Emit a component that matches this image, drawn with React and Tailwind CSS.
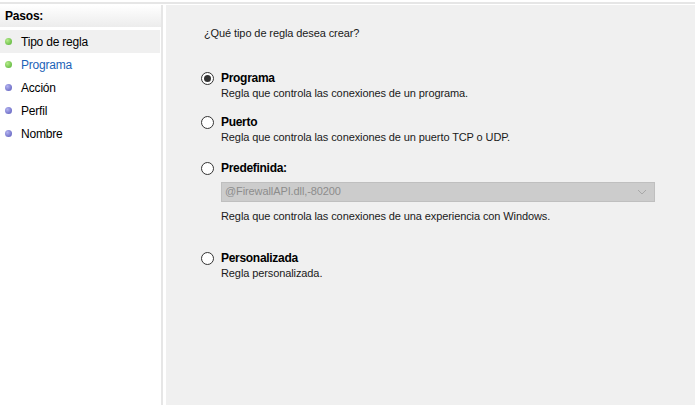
import React from "react";

const steps = [
  { label: "Tipo de regla", done: true, selected: true },
  { label: "Programa", done: true, current: true },
  { label: "Acción" },
  { label: "Perfil" },
  { label: "Nombre" },
];

const Bullet = ({ done }) => (
  <span
    className={`w-[7px] h-[7px] rounded-full shrink-0 ${
      done
        ? "bg-[radial-gradient(circle_at_35%_35%,#b6ec8c,#4fae2e)]"
        : "bg-[radial-gradient(circle_at_35%_35%,#b4b4f0,#5555b8)]"
    }`}
  />
);

const Radio = ({ checked }) => (
  <span className="w-[13px] h-[13px] rounded-full border border-[#333] bg-white flex items-center justify-center shrink-0">
    {checked && <span className="w-[7px] h-[7px] rounded-full bg-[#333]" />}
  </span>
);

const Option = ({ title, desc, checked, children, className = "" }) => (
  <div className={`flex gap-[7px] ${className}`}>
    <div className="pt-[1px]">
      <Radio checked={checked} />
    </div>
    <div className="flex-1">
      <div className="font-bold text-black leading-[15px] text-[12px] tracking-[-0.3px]">{title}</div>
      {children}
      <div className="leading-[15px]">{desc}</div>
    </div>
  </div>
);

export default function App() {
  return (
    <div
      className="w-[695px] h-[405px] bg-white text-[11px] tracking-[-0.1px] text-[#1a1a1a] flex flex-col overflow-hidden"
      style={{ fontFamily: '"Liberation Sans", Arial, sans-serif' }}
    >
      <div className="h-[5px] pt-[2px] shrink-0">
        <div className="h-[2px] bg-[#e6e6e6]" />
      </div>
      <div className="flex flex-1">
        {/* steps */}
        <div className="w-[163px] shrink-0 border-r-2 border-[#e6e6e6] text-[12px] tracking-[-0.2px]">
          <div className="h-[22px] bg-gradient-to-b from-white to-[#ececec] flex items-center pl-[5px] font-bold text-black">
            Pasos:
          </div>
          <div className="mt-[3px] flex flex-col">
            {steps.map((s) => (
              <div
                key={s.label}
                className={`h-[23px] flex items-center gap-[9px] pl-[5px] mr-[1px] ${
                  s.selected ? "bg-[#f0f0f0]" : ""
                }`}
              >
                <Bullet done={s.done} />
                <span className={s.current ? "text-[#1c63b7]" : "text-black"}>
                  {s.label}
                </span>
              </div>
            ))}
          </div>
        </div>
        <div className="w-[3px] shrink-0" />
        {/* content */}
        <div className="flex-1 bg-[#f0f0f0] pl-[35px] pr-[40px] pt-[20px]">
          <div className="text-[#1a1a1a] pl-[3px]">¿Qué tipo de regla desea crear?</div>
          <Option
            className="mt-[29px]"
            checked
            title="Programa"
            desc="Regla que controla las conexiones de un programa."
          />
          <Option
            className="mt-[14px]"
            title="Puerto"
            desc="Regla que controla las conexiones de un puerto TCP o UDP."
          />
          <Option className="mt-[16px]" title="Predefinida:" desc="Regla que controla las conexiones de una experiencia con Windows.">
            <div className="mt-[6px] mb-[7px] h-[20px] bg-[#cccccc] border border-[#bfbfbf] flex items-center justify-between px-[3px] text-[#8c8c8c]">
              <span>@FirewallAPI.dll,-80200</span>
              <svg width="10" height="6" viewBox="0 0 10 6" className="mr-[4px]">
                <path d="M1 1l4 4 4-4" fill="none" stroke="#a8a8a8" strokeWidth="1" />
              </svg>
            </div>
          </Option>
          <Option
            className="mt-[27px]"
            title="Personalizada"
            desc="Regla personalizada."
          />
        </div>
      </div>
    </div>
  );
}
